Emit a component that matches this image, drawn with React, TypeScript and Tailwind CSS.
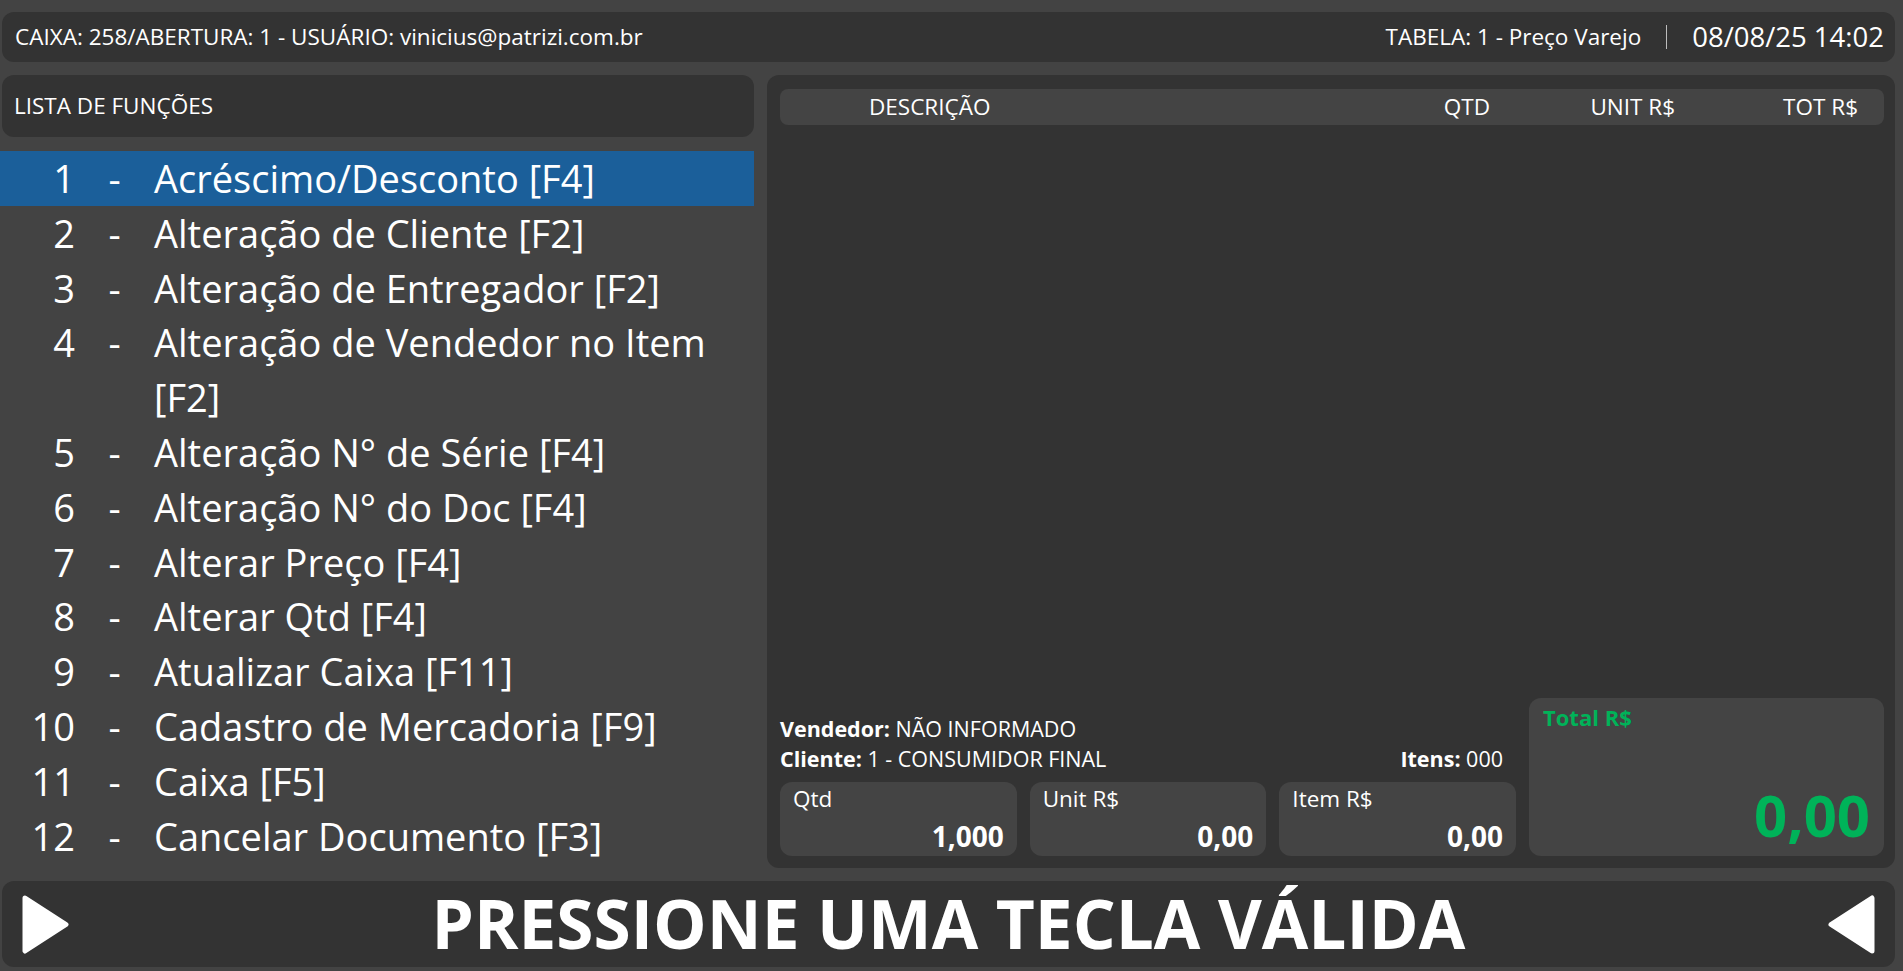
import type { ReactNode } from 'react'

const funcoes = [
  'Acréscimo/Desconto [F4]',
  'Alteração de Cliente [F2]',
  'Alteração de Entregador [F2]',
  'Alteração de Vendedor no Item [F2]',
  'Alteração N° de Série [F4]',
  'Alteração N° do Doc [F4]',
  'Alterar Preço [F4]',
  'Alterar Qtd [F4]',
  'Atualizar Caixa [F11]',
  'Cadastro de Mercadoria [F9]',
  'Caixa [F5]',
  'Cancelar Documento [F3]',
]

function Seta({ flip }: { flip?: boolean }) {
  return (
    <svg width="47" height="59" viewBox="0 0 47 59" className={flip ? 'rotate-180' : ''}>
      <polygon
        points="3,3 44,29.5 3,56"
        fill="#ffffff"
        stroke="#ffffff"
        strokeWidth="5"
        strokeLinejoin="round"
      />
    </svg>
  )
}

function Campo({ label, valor }: { label: string; valor: ReactNode }) {
  return (
    <div className="flex-1 h-[74px] rounded-xl bg-[#444444] px-[13px] pt-[3px] pb-[3px] flex flex-col justify-between">
      <span className="text-[22.5px] leading-[28px]">{label}</span>
      <span className="text-[28px] leading-[34px] font-bold text-right">{valor}</span>
    </div>
  )
}

export default function App() {
  return (
    <div
      className="h-screen w-full bg-[#434343] text-white flex flex-col pt-[12px] pb-[4px] pr-[8px] gap-[13px] overflow-hidden"
      style={{ fontFamily: '"Open Sans", "Noto Sans", sans-serif' }}
    >
      {/* barra superior */}
      <header className="ml-[2px] h-[50px] shrink-0 rounded-xl bg-[#333333] flex items-center justify-between pl-[13px] pr-[11px]">
        <span className="text-[22.5px]">CAIXA: 258/ABERTURA: 1 - USUÁRIO: vinicius@patrizi.com.br</span>
        <div className="flex items-center">
          <span className="text-[22.5px]">TABELA: 1 - Preço Varejo</span>
          <span className="mx-[25px] h-[24px] w-px bg-[#bdbdbd]" />
          <span className="text-[27.5px]">08/08/25 14:02</span>
        </div>
      </header>

      <main className="flex-1 flex gap-[13px] min-h-0">
        {/* lista de funções */}
        <section className="w-[754px] shrink-0 flex flex-col">
          <div className="ml-[2px] h-[62px] shrink-0 rounded-xl bg-[#333333] flex items-center px-[12px] text-[22.5px]">
            LISTA DE FUNÇÕES
          </div>
          <ul className="mt-[14px] text-[38px] leading-[54.8px]">
            {funcoes.map((f, i) => (
              <li key={f} className={`flex ${i === 0 ? 'bg-[#1b5f9a]' : ''}`}>
                <span className="w-[75px] shrink-0 text-right">{i + 1}</span>
                <span className="w-[79px] shrink-0 text-center">-</span>
                <span className="flex-1 pr-[20px]">{f}</span>
              </li>
            ))}
          </ul>
        </section>

        {/* itens do documento */}
        <section className="flex-1 rounded-xl bg-[#333333] pt-[14px] pl-[13px] pr-[11px] pb-[12px] flex flex-col">
          <div className="h-[36px] shrink-0 rounded-lg bg-[#444444] flex items-center text-[22.5px]">
            <span className="ml-[89px] flex-1">DESCRIÇÃO</span>
            <span className="w-[60px] text-right">QTD</span>
            <span className="w-[185px] text-right">UNIT R$</span>
            <span className="w-[183px] text-right mr-[26px]">TOT R$</span>
          </div>

          <div className="flex-1" />

          <div className="flex gap-[13px] items-end">
            <div className="flex-1 flex flex-col">
              <div className="text-[21.5px] leading-[29.5px]">
                <div>
                  <b>Vendedor:</b> NÃO INFORMADO
                </div>
                <div className="flex justify-between pr-[13px]">
                  <span>
                    <b>Cliente:</b> 1 - CONSUMIDOR FINAL
                  </span>
                  <span>
                    <b>Itens:</b> 000
                  </span>
                </div>
              </div>
              <div className="mt-[9px] flex gap-[13px]">
                <Campo label="Qtd" valor="1,000" />
                <Campo label="Unit R$" valor="0,00" />
                <Campo label="Item R$" valor="0,00" />
              </div>
            </div>

            <div className="w-[355px] h-[158px] shrink-0 rounded-xl bg-[#444444] px-[14px] pt-[4px] pb-[6px] flex flex-col justify-between text-[#00b359] font-bold">
              <span className="text-[22px] leading-[30px]">Total R$</span>
              <span className="text-[58px] leading-[70px] text-right">0,00</span>
            </div>
          </div>
        </section>
      </main>

      {/* rodapé */}
      <footer className="ml-[2px] h-[86px] shrink-0 rounded-xl bg-[#333333] flex items-center justify-between px-[20px]">
        <Seta />
        <span className="text-[67.5px] font-bold leading-none">PRESSIONE UMA TECLA VÁLIDA</span>
        <Seta flip />
      </footer>
    </div>
  )
}
